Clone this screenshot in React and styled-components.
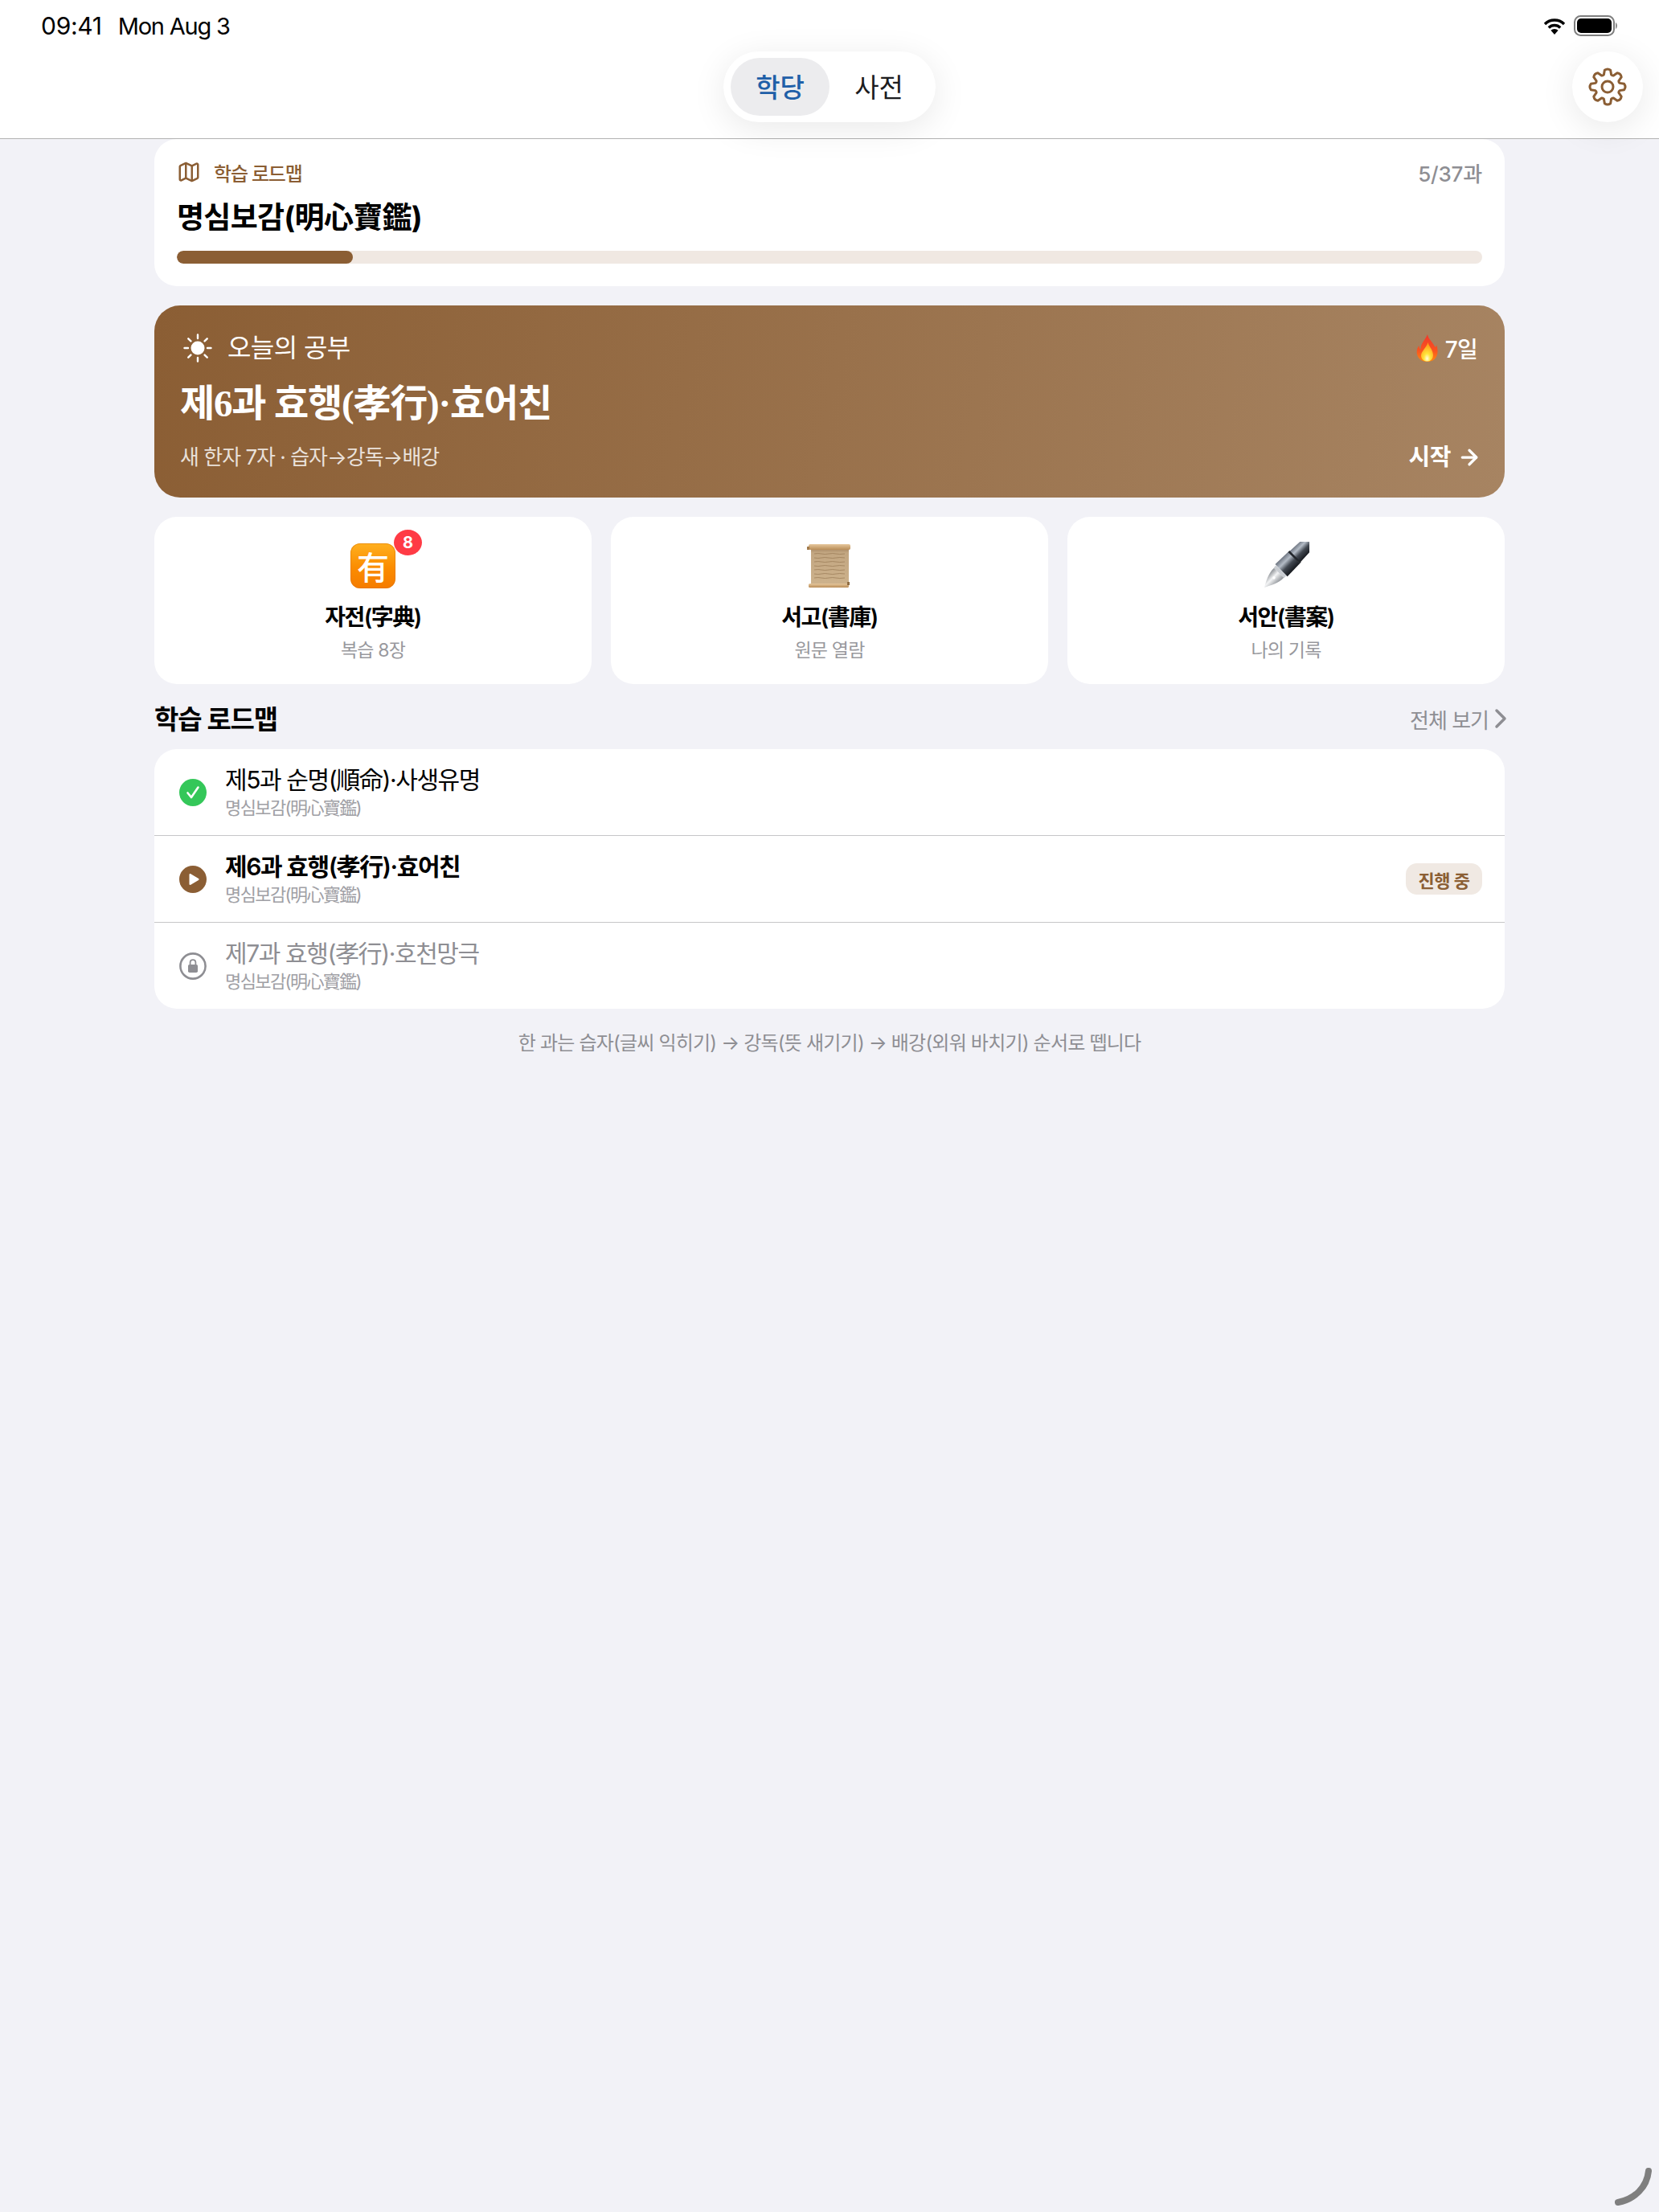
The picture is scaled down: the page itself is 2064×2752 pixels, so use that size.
import React from "react";
import styled, { createGlobalStyle } from "styled-components";
import { ArrowRight, ChevronRight, Map as MapIcon } from "lucide-react";

const brown = "#8b5e34";
const gray = "#8e8e93";

const GlobalStyle = createGlobalStyle`
  html, body {
    margin: 0;
    padding: 0;
    background: #f2f2f7;
    font-family: Inter, "Noto Sans CJK KR", sans-serif;
    color: #000;
  }
`;

const Page = styled.div`
  position: relative;
  min-height: 2752px;
  background: #f2f2f7;
  overflow: hidden;
`;

const Header = styled.header`
  position: relative;
  z-index: 2;
  height: 172px;
  background: #fff;
  border-bottom: 1px solid #b2b2b2;
`;

const StatusBar = styled.div`
  height: 64px;
  padding: 0 52px 0 51px;
  display: flex;
  align-items: center;
  justify-content: space-between;
  font-size: 30px;
`;

const Clock = styled.div`
  display: flex;
  align-items: center;
  gap: 20px;
  letter-spacing: -0.3px;
`;

const DateText = styled.span`
  font-size: 29px;
  letter-spacing: -1.2px;
`;

const StatusIcons = styled.div`
  display: flex;
  align-items: center;
  gap: 10px;
`;

const NavRow = styled.div`
  display: grid;
  grid-template-columns: 1fr auto 1fr;
  padding: 0 20px;
`;

const Segmented = styled.div`
  grid-column: 2;
  display: flex;
  height: 88px;
  box-sizing: border-box;
  padding: 8px 9px;
  border-radius: 44px;
  background: #fff;
  box-shadow: 0 8px 44px rgba(0, 0, 0, 0.09);
`;

const Segment = styled.div`
  width: 123px;
  display: flex;
  align-items: center;
  justify-content: center;
  padding-bottom: 3px;
  border-radius: 36px;
  font-size: 33px;
  font-weight: ${(p) => (p.$active ? 500 : 400)};
  color: ${(p) => (p.$active ? "#1f5fa8" : "#1c1c1e")};
  background: ${(p) => (p.$active ? "#ececee" : "transparent")};
`;

const GearButton = styled.div`
  grid-column: 3;
  justify-self: end;
  width: 88px;
  height: 88px;
  border-radius: 50%;
  display: flex;
  align-items: center;
  justify-content: center;
  background: #fff;
  box-shadow: 0 8px 44px rgba(0, 0, 0, 0.09);
`;

const Content = styled.main`
  padding: 0 192px;
  display: flex;
  flex-direction: column;
  gap: 24px;
`;

const ProgressCard = styled.section`
  background: #fff;
  border-radius: 28px;
  padding: 25px 28px 28px;
`;

const ProgressHead = styled.div`
  display: flex;
  align-items: center;
  justify-content: space-between;
  height: 32px;
`;

const Eyebrow = styled.div`
  display: flex;
  align-items: center;
  gap: 16px;
  font-size: 24px;
  font-weight: 500;
  letter-spacing: -1.2px;
  color: ${brown};
`;

const Count = styled.div`
  font-size: 26px;
  font-weight: 500;
  letter-spacing: -0.2px;
  color: ${gray};
`;

const CourseTitle = styled.h1`
  margin: 17px 0 17px;
  font-size: 37px;
  line-height: 48px;
  font-weight: 700;
  letter-spacing: -0.7px;
`;

const Track = styled.div`
  height: 16px;
  border-radius: 8px;
  background: #f0e8e2;
  overflow: hidden;
`;

const Fill = styled.div`
  height: 100%;
  border-radius: 8px;
  background: ${brown};
`;

const Hero = styled.section`
  height: 239px;
  box-sizing: border-box;
  padding: 33px 34px 0 32px;
  border-radius: 32px;
  background: linear-gradient(100deg, #8b5e34 0%, #a78462 100%);
  color: #fff;
`;

const HeroRow = styled.div`
  display: flex;
  align-items: center;
  justify-content: space-between;
`;

const HeroLabel = styled.div`
  display: flex;
  align-items: center;
  gap: 19px;
  padding-left: 4px;
  font-size: 32px;
  line-height: 36px;
  letter-spacing: -0.6px;
`;

const Streak = styled.div`
  display: flex;
  align-items: center;
  gap: 9px;
  font-size: 28px;
  font-weight: 500;
  letter-spacing: -0.8px;
`;

const HeroTitle = styled.h2`
  margin: 19px 0 19px;
  font-family: "Liberation Serif", "Noto Sans CJK KR", serif;
  font-size: 47px;
  line-height: 60px;
  font-weight: 700;
  letter-spacing: -1.2px;
`;

const HeavyDot = styled.span`
  margin: 0 -7px;
  font-family: "Noto Sans CJK KR", sans-serif;
  font-weight: 900;
  line-height: 0;
`;

const HeroSub = styled.div`
  font-size: 26px;
  line-height: 36px;
  letter-spacing: -1px;
  color: rgba(255, 255, 255, 0.82);
`;

const Start = styled.div`
  display: flex;
  align-items: center;
  gap: 8px;
  margin-right: -5px;
  font-size: 29px;
  line-height: 36px;
  font-weight: 600;
  letter-spacing: -0.4px;
`;

const Features = styled.div`
  display: grid;
  grid-template-columns: repeat(3, 1fr);
  gap: 24px;
`;

const Feature = styled.div`
  height: 208px;
  box-sizing: border-box;
  padding-top: 33px;
  display: flex;
  flex-direction: column;
  align-items: center;
  background: #fff;
  border-radius: 28px;
`;

const EmojiSlot = styled.div`
  position: relative;
  width: 56px;
  height: 56px;
`;

const KanjiTile = styled.div`
  width: 56px;
  height: 56px;
  border-radius: 12px;
  display: flex;
  align-items: center;
  justify-content: center;
  background: linear-gradient(180deg, #ffb01f 0%, #fb8c00 55%, #f57c00 100%);
  box-shadow: inset 0 0 0 1px rgba(214, 110, 0, 0.45);
  color: #fff;
  font-size: 40px;
  font-weight: 500;
`;

const Badge = styled.div`
  position: absolute;
  top: -17px;
  right: -33px;
  width: 35px;
  height: 32px;
  border-radius: 50%;
  display: flex;
  align-items: center;
  justify-content: center;
  background: #ff3b45;
  color: #fff;
  font-size: 20px;
  font-weight: 700;
`;

const FeatureTitle = styled.div`
  margin-top: 18px;
  font-size: 28px;
  line-height: 36px;
  font-weight: 600;
  letter-spacing: -1.5px;
`;

const FeatureSub = styled.div`
  margin-top: 8px;
  font-size: 23px;
  line-height: 30px;
  letter-spacing: -0.8px;
  color: #98989d;
`;

const Section = styled.section`
  display: flex;
  flex-direction: column;
  gap: 19px;
`;

const SectionHead = styled.div`
  display: flex;
  align-items: center;
  justify-content: space-between;
  height: 38px;
`;

const SectionTitle = styled.h3`
  margin: -2px 0 0;
  font-size: 33px;
  font-weight: 600;
  letter-spacing: -1.2px;
`;

const SeeAll = styled.div`
  display: flex;
  align-items: center;
  font-size: 26px;
  letter-spacing: -1px;
  color: ${gray};
  svg {
    margin: 0 -15px 0 -5px;
  }
`;

const List = styled.div`
  background: #fff;
  border-radius: 28px;
  overflow: hidden;
`;

const Row = styled.div`
  height: 107px;
  padding: 0 28px 0 31px;
  display: flex;
  align-items: center;
  gap: 23px;
  & + & {
    border-top: 1px solid #c6c6c8;
  }
`;

const RowBody = styled.div`
  flex: 1;
`;

const RowTitle = styled.div`
  font-size: 30px;
  line-height: 38px;
  letter-spacing: -1.4px;
  font-weight: ${(p) => (p.$current ? 600 : 400)};
  color: ${(p) => (p.$locked ? gray : "#000")};
`;

const RowSub = styled.div`
  margin-top: 1px;
  font-size: 22px;
  line-height: 30px;
  letter-spacing: -1.6px;
  color: #a0a0a5;
`;

const Tag = styled.div`
  width: 95px;
  height: 39px;
  border-radius: 14px;
  display: flex;
  align-items: center;
  justify-content: center;
  background: #f0e9e3;
  color: ${brown};
  font-size: 22px;
  font-weight: 700;
  letter-spacing: -0.5px;
`;

const Note = styled.p`
  margin: 0;
  text-align: center;
  font-size: 24px;
  line-height: 38px;
  letter-spacing: -0.8px;
  color: ${gray};
`;

const CornerMark = styled.svg`
  position: absolute;
  right: 6px;
  bottom: 5px;
`;

const polar = (r, deg) => {
  const a = (deg * Math.PI) / 180;
  return `${(24 + r * Math.cos(a)).toFixed(2)} ${(24 + r * Math.sin(a)).toFixed(2)}`;
};

// eight rounded teeth, worked out around the centre of a 48 box
const gearPath = () => {
  let d = "";
  for (let i = 0; i < 8; i++) {
    const t = i * 45 - 90;
    d += `${i === 0 ? "M" : "L"}${polar(15.8, t - 17)}`;
    d += `L${polar(21, t - 10)}Q${polar(23.4, t)} ${polar(21, t + 10)}`;
    d += `L${polar(15.8, t + 17)}Q${polar(14.8, t + 22.5)} ${polar(15.8, t + 28)}`;
  }
  return d + "Z";
};

const Gear = () => (
  <svg width="48" height="48" viewBox="0 0 48 48" fill="none" stroke={brown} strokeWidth="3" strokeLinejoin="round">
    <path d={gearPath()} />
    <circle cx="24" cy="24" r="7" />
  </svg>
);

const Wifi = () => (
  <svg width="28" height="21" viewBox="0 0 28 21" fill="none">
    <path d="M2 8 A17 17 0 0 1 26 8" stroke="#000" strokeWidth="3.4" />
    <path d="M6.8 12.4 A10.4 10.4 0 0 1 21.2 12.4" stroke="#000" strokeWidth="3.4" />
    <path d="M14 21 L9.4 15.8 A6.6 6.6 0 0 1 18.6 15.8 Z" fill="#000" />
  </svg>
);

const Battery = () => (
  <svg width="54" height="26" viewBox="0 0 54 26" fill="none">
    <rect x="1" y="1" width="49" height="24" rx="7.5" stroke="#7f7f7f" strokeWidth="2" />
    <rect x="4" y="4" width="43" height="18" rx="5" fill="#000" />
    <path d="M52 9 C53.5 10 54 11.5 54 13 C54 14.5 53.5 16 52 17 Z" fill="#8a8a8a" />
  </svg>
);

const Sun = () => (
  <svg width="36" height="36" viewBox="0 0 36 36" stroke="#fff" strokeWidth="2.4" strokeLinecap="round">
    <circle cx="18" cy="18" r="8.5" fill="#fff" stroke="none" />
    <path d="M18 1.5V6M18 30V34.5M1.5 18H6M30 18H34.5M6.3 6.3L9.4 9.4M26.6 26.6L29.7 29.7M6.3 29.7L9.4 26.6M26.6 9.4L29.7 6.3" />
  </svg>
);

const Flame = () => (
  <svg width="27" height="34" viewBox="0 0 27 34">
    <defs>
      <linearGradient id="flameOuter" x1="0" y1="0" x2="0" y2="1">
        <stop offset="0" stopColor="#f0392b" />
        <stop offset="0.6" stopColor="#f9541f" />
        <stop offset="1" stopColor="#ff8a10" />
      </linearGradient>
      <radialGradient id="flameInner" cx="0.5" cy="0.85" r="0.75">
        <stop offset="0" stopColor="#fffde0" />
        <stop offset="0.35" stopColor="#ffe53b" />
        <stop offset="1" stopColor="#ff9a1a" />
      </radialGradient>
    </defs>
    <path d="M14 0 C15 6 20 9 23 15 C24 17 25 15 25 13 C27 18 27.5 25 24 29.5 C21.5 32.8 17.5 34 13.5 34 C8 34 2.5 31 1 25 C0 20.5 1.5 16 3.5 14 C3.5 16 4 18 5.5 18.5 C5 12 11 7 14 0 Z" fill="url(#flameOuter)" />
    <path d="M14.5 10 C15.5 15 21 19 21 26 C21 30.5 17.5 33.6 13.5 33.6 C9.5 33.6 6 30.5 6 26.5 C6 21 12.5 17 14.5 10 Z" fill="url(#flameInner)" />
  </svg>
);

const Scroll = () => (
  <svg width="56" height="56" viewBox="0 0 56 56">
    <defs>
      <linearGradient id="paper" x1="0" y1="0" x2="0" y2="1">
        <stop offset="0" stopColor="#a58560" />
        <stop offset="0.12" stopColor="#c2a681" />
        <stop offset="1" stopColor="#cdb28c" />
      </linearGradient>
      <linearGradient id="roll" x1="0" y1="0" x2="0" y2="1">
        <stop offset="0" stopColor="#e6c79c" />
        <stop offset="1" stopColor="#b98d58" />
      </linearGradient>
    </defs>
    <rect x="5" y="6" width="47" height="46" fill="url(#paper)" />
    <g stroke="#9c7d58" strokeWidth="1" fill="none" opacity="0.75">
      <path d="M9 13q5-1 9 0t9 0 9 0 11 0" />
      <path d="M9 18q5 1 9 0t9 0 9 0 11 0" />
      <path d="M9 23q5-1 9 0t9 0 9 0 11 0" />
      <path d="M9 28q5 1 9 0t9 0 9 0 11 0" />
      <path d="M9 33q5-1 9 0t9 0 9 0 11 0" />
      <path d="M9 38q5 1 9 0t9 0 9 0 11 0" />
      <path d="M9 43q5-1 9 0t9 0 9 0 11 0" />
    </g>
    <rect x="2" y="1" width="52" height="7" rx="2" fill="url(#roll)" />
    <rect x="0" y="4" width="3" height="4" fill="#a27b4c" />
    <rect x="2" y="50" width="50" height="5" rx="1.5" fill="url(#roll)" />
    <rect x="50" y="48" width="3" height="4" fill="#8f6d43" />
  </svg>
);

const Pen = () => (
  <svg width="60" height="60" viewBox="0 0 56 56" style={{ margin: "-2px 0 0 -3px" }}>
    <defs>
      <linearGradient id="barrel" x1="0" y1="0" x2="1" y2="0">
        <stop offset="0" stopColor="#6d7480" />
        <stop offset="0.3" stopColor="#b4bcc6" />
        <stop offset="0.6" stopColor="#424851" />
        <stop offset="1" stopColor="#15181d" />
      </linearGradient>
      <linearGradient id="nib" x1="0" y1="0" x2="1" y2="0">
        <stop offset="0" stopColor="#8b8f94" />
        <stop offset="0.45" stopColor="#f4f5f6" />
        <stop offset="1" stopColor="#8e9297" />
      </linearGradient>
    </defs>
    <g transform="rotate(45 28 28)">
      <path d="M20.5 -9 C21 -13 25 -14 28.5 -14 C32 -14 36 -13 36.5 -9 L37.5 13 L19.5 13 Z" fill="url(#barrel)" />
      <path d="M19 14 L38 14 L38.5 35 L18.5 35 Z" fill="url(#barrel)" />
      <rect x="19" y="12" width="19" height="2.4" fill="#22262b" />
      <rect x="20" y="35" width="17" height="4" fill="#c9cdd2" />
      <path d="M20.5 39 L36.5 39 C37 48 32 56 28.5 63 C25 56 20 48 20.5 39 Z" fill="url(#nib)" />
      <circle cx="28.5" cy="47" r="1.6" fill="#fff" />
    </g>
  </svg>
);

const DoneIcon = () => (
  <svg width="34" height="34" viewBox="0 0 34 34">
    <circle cx="17" cy="17" r="17" fill="#34c759" />
    <path d="M10.5 17.5L15 23L23.5 10.5" fill="none" stroke="#fff" strokeWidth="2.6" strokeLinecap="round" strokeLinejoin="round" />
  </svg>
);

const PlayIcon = () => (
  <svg width="34" height="34" viewBox="0 0 34 34">
    <circle cx="17" cy="17" r="17" fill={brown} />
    <path d="M12.5 11.2C12.5 10.2 13.5 9.7 14.3 10.2L24 16C24.8 16.5 24.8 17.5 24 18L14.3 23.8C13.5 24.3 12.5 23.8 12.5 22.8Z" fill="#fff" />
  </svg>
);

const LockIcon = () => (
  <svg width="34" height="34" viewBox="0 0 34 34">
    <circle cx="17" cy="17" r="15.6" fill="none" stroke={gray} strokeWidth="2.6" />
    <path d="M13.6 15V12.6C13.6 10.6 15 9.2 17 9.2C19 9.2 20.4 10.6 20.4 12.6V15" fill="none" stroke={gray} strokeWidth="1.8" />
    <rect x="11" y="15" width="12" height="10" rx="1.8" fill={gray} />
  </svg>
);

const lessons = [
  { title: "제5과 순명(順命)·사생유명", icon: <DoneIcon /> },
  { title: "제6과 효행(孝行)·효어친", icon: <PlayIcon />, current: true },
  { title: "제7과 효행(孝行)·호천망극", icon: <LockIcon />, locked: true },
];

export default function App() {
  return (
    <Page>
      <GlobalStyle />
      <Header>
        <StatusBar>
          <Clock>
            <span>09:41</span>
            <DateText>Mon Aug 3</DateText>
          </Clock>
          <StatusIcons>
            <Wifi />
            <Battery />
          </StatusIcons>
        </StatusBar>
        <NavRow>
          <Segmented>
            <Segment $active>학당</Segment>
            <Segment>사전</Segment>
          </Segmented>
          <GearButton>
            <Gear />
          </GearButton>
        </NavRow>
      </Header>

      <Content>
        <ProgressCard>
          <ProgressHead>
            <Eyebrow>
              <MapIcon size={30} strokeWidth={2} />
              학습 로드맵
            </Eyebrow>
            <Count>5/37과</Count>
          </ProgressHead>
          <CourseTitle>명심보감(明心寶鑑)</CourseTitle>
          <Track>
            <Fill style={{ width: `${(5 / 37) * 100}%` }} />
          </Track>
        </ProgressCard>

        <Hero>
          <HeroRow>
            <HeroLabel>
              <Sun />
              오늘의 공부
            </HeroLabel>
            <Streak>
              <Flame />
              7일
            </Streak>
          </HeroRow>
          <HeroTitle>
            제6과 효행(孝行)·효어친
          </HeroTitle>
          <HeroRow>
            <HeroSub>새 한자 7자 · 습자→강독→배강</HeroSub>
            <Start>
              시작
              <ArrowRight size={30} strokeWidth={2.6} />
            </Start>
          </HeroRow>
        </Hero>

        <Features>
          <Feature>
            <EmojiSlot>
              <KanjiTile>有</KanjiTile>
              <Badge>8</Badge>
            </EmojiSlot>
            <FeatureTitle>자전(字典)</FeatureTitle>
            <FeatureSub>복습 8장</FeatureSub>
          </Feature>
          <Feature>
            <EmojiSlot>
              <Scroll />
            </EmojiSlot>
            <FeatureTitle>서고(書庫)</FeatureTitle>
            <FeatureSub>원문 열람</FeatureSub>
          </Feature>
          <Feature>
            <EmojiSlot>
              <Pen />
            </EmojiSlot>
            <FeatureTitle>서안(書案)</FeatureTitle>
            <FeatureSub>나의 기록</FeatureSub>
          </Feature>
        </Features>

        <Section>
          <SectionHead>
            <SectionTitle>학습 로드맵</SectionTitle>
            <SeeAll>
              전체 보기
              <ChevronRight size={40} strokeWidth={2.1} />
            </SeeAll>
          </SectionHead>
          <List>
            {lessons.map((lesson) => (
              <Row key={lesson.title}>
                {lesson.icon}
                <RowBody>
                  <RowTitle $current={lesson.current} $locked={lesson.locked}>
                    {lesson.title}
                  </RowTitle>
                  <RowSub>명심보감(明心寶鑑)</RowSub>
                </RowBody>
                {lesson.current && <Tag>진행 중</Tag>}
              </Row>
            ))}
          </List>
        </Section>

        <Note>한 과는 습자(글씨 익히기) → 강독(뜻 새기기) → 배강(외워 바치기) 순서로 뗍니다</Note>
      </Content>

      <CornerMark width="50" height="50" viewBox="0 0 50 50" fill="none">
        <path d="M43 4C41 24 26 39 5 43" stroke="#7f7f7f" strokeWidth="8" strokeLinecap="round" />
      </CornerMark>
    </Page>
  );
}
